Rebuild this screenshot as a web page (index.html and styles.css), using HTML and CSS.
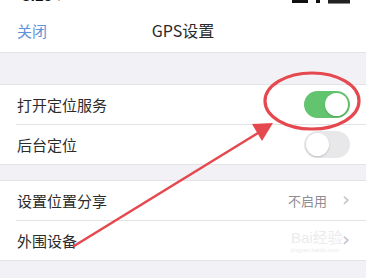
FILE: index.html
```html
<!DOCTYPE html>
<html lang="zh">
<head>
<meta charset="utf-8">
<link rel="stylesheet" href="styles.css">
</head>
<body>
<div class="page">
  <div class="status">
    <span class="clock">3:25 ↗</span>
    <span class="sicons"><span class="sig"></span><span class="wifi"></span><span class="bat"></span></span>
  </div>
  <div class="nav">
    <span class="close">关闭</span>
    <span class="title">GPS设置</span>
  </div>
  <div class="gap gap-top"></div>
  <div class="group">
    <div class="row">
      <span class="label">打开定位服务</span>
      <span class="toggle on"><span class="knob"></span></span>
    </div>
    <div class="row">
      <span class="label">后台定位</span>
      <span class="toggle off"><span class="knob"></span></span>
    </div>
  </div>
  <div class="gap gap-mid"></div>
  <div class="group">
    <div class="row">
      <span class="label">设置位置分享</span>
      <span class="right"><span class="value">不启用</span><span class="chev">›</span></span>
    </div>
    <div class="row">
      <span class="label">外围设备</span>
      <span class="right"><span class="chev">›</span></span>
    </div>
  </div>
  <div class="gap"></div>
  <div class="wm">Bai经验<small>jingyan.baidu.com</small></div>
  <svg class="annot" width="366" height="278" viewBox="0 0 366 278">
    <ellipse cx="312" cy="101" rx="47" ry="28" fill="none" stroke="#e5494f" stroke-width="3.2"/>
    <line x1="74" y1="246" x2="258" y2="133" stroke="#e5494f" stroke-width="2.6" stroke-linecap="round"/>
    <polygon points="273,123 252,124 262,141" fill="#e5494f"/>
  </svg>
</div>
</body>
</html>
```
FILE: styles.css
```css
html, body {
  margin: 0;
  padding: 0;
  background: #f2f2f6;
}
.page {
  position: relative;
  width: 366px;
  height: 278px;
  overflow: hidden;
  background: #f2f2f6;
  font-family: "Noto Sans CJK SC", "Noto Sans", sans-serif;
}
.status {
  height: 8px;
  background: #ffffff;
  overflow: hidden;
  display: flex;
  justify-content: space-between;
  padding: 0 16px 0 22px;
}
.clock {
  font-family: "Liberation Sans", sans-serif;
  font-weight: bold;
  font-size: 15px;
  line-height: 15px;
  color: #111;
  margin-top: -12px;
}
.sicons {
  display: flex;
  gap: 8px;
  align-items: flex-start;
}
.sig {
  width: 16px;
  height: 3px;
  background: #111;
}
.wifi {
  width: 4px;
  height: 3px;
  background: #111;
}
.bat {
  width: 22px;
  height: 3px;
  border-bottom: 1px solid #888;
  background: #222;
}
.nav {
  height: 44px;
  background: #ffffff;
  border-bottom: 1px solid #e3e3e6;
  display: grid;
  grid-template-columns: 1fr auto 1fr;
  align-items: center;
  padding: 0 17px;
}
.close {
  font-size: 15px;
  color: #5e92d9;
  grid-column: 1;
}
.title {
  grid-column: 2;
  font-size: 16px;
  color: #2a2a2a;
}
.gap {
  height: 40px;
}
.gap-top {
  height: 31px;
}
.gap-mid {
  height: 15px;
}
.group {
  background: #ffffff;
  border-top: 1px solid #e3e3e6;
  border-bottom: 1px solid #e3e3e6;
  padding-left: 16px;
}
.row {
  height: 39px;
  display: flex;
  align-items: center;
  justify-content: space-between;
  padding-right: 16px;
  padding-left: 1px;
}
.row + .row {
  border-top: 1px solid #e3e3e6;
}
.label {
  font-size: 15px;
  color: #2b2b2b;
}
.toggle {
  width: 46px;
  height: 27px;
  border-radius: 14px;
  box-sizing: border-box;
  display: flex;
  align-items: center;
  padding: 0 2px;
}
.toggle.on {
  background: #62c46e;
  justify-content: flex-end;
}
.toggle.off {
  background: #e8e8ea;
  justify-content: flex-start;
}
.knob {
  width: 23px;
  height: 23px;
  border-radius: 50%;
  background: #ffffff;
  box-shadow: 0 1px 2px rgba(0,0,0,0.18);
}
.right {
  display: flex;
  align-items: center;
  gap: 15px;
}
.value {
  font-size: 13px;
  color: #8d8d92;
}
.chev {
  font-family: "DejaVu Sans", sans-serif;
  font-size: 20px;
  line-height: 20px;
  color: #c4c4c8;
  margin-top: -3px;
}
.wm {
  position: absolute;
  left: 291px;
  top: 230px;
  display: flex;
  flex-direction: column;
  font-family: "Liberation Sans", "Noto Sans CJK SC", sans-serif;
  font-size: 15px;
  line-height: 16px;
  color: #ebebed;
  pointer-events: none;
}
.wm small {
  font-size: 6px;
  line-height: 8px;
}
.annot {
  position: absolute;
  left: 0;
  top: 0;
  pointer-events: none;
}
```
